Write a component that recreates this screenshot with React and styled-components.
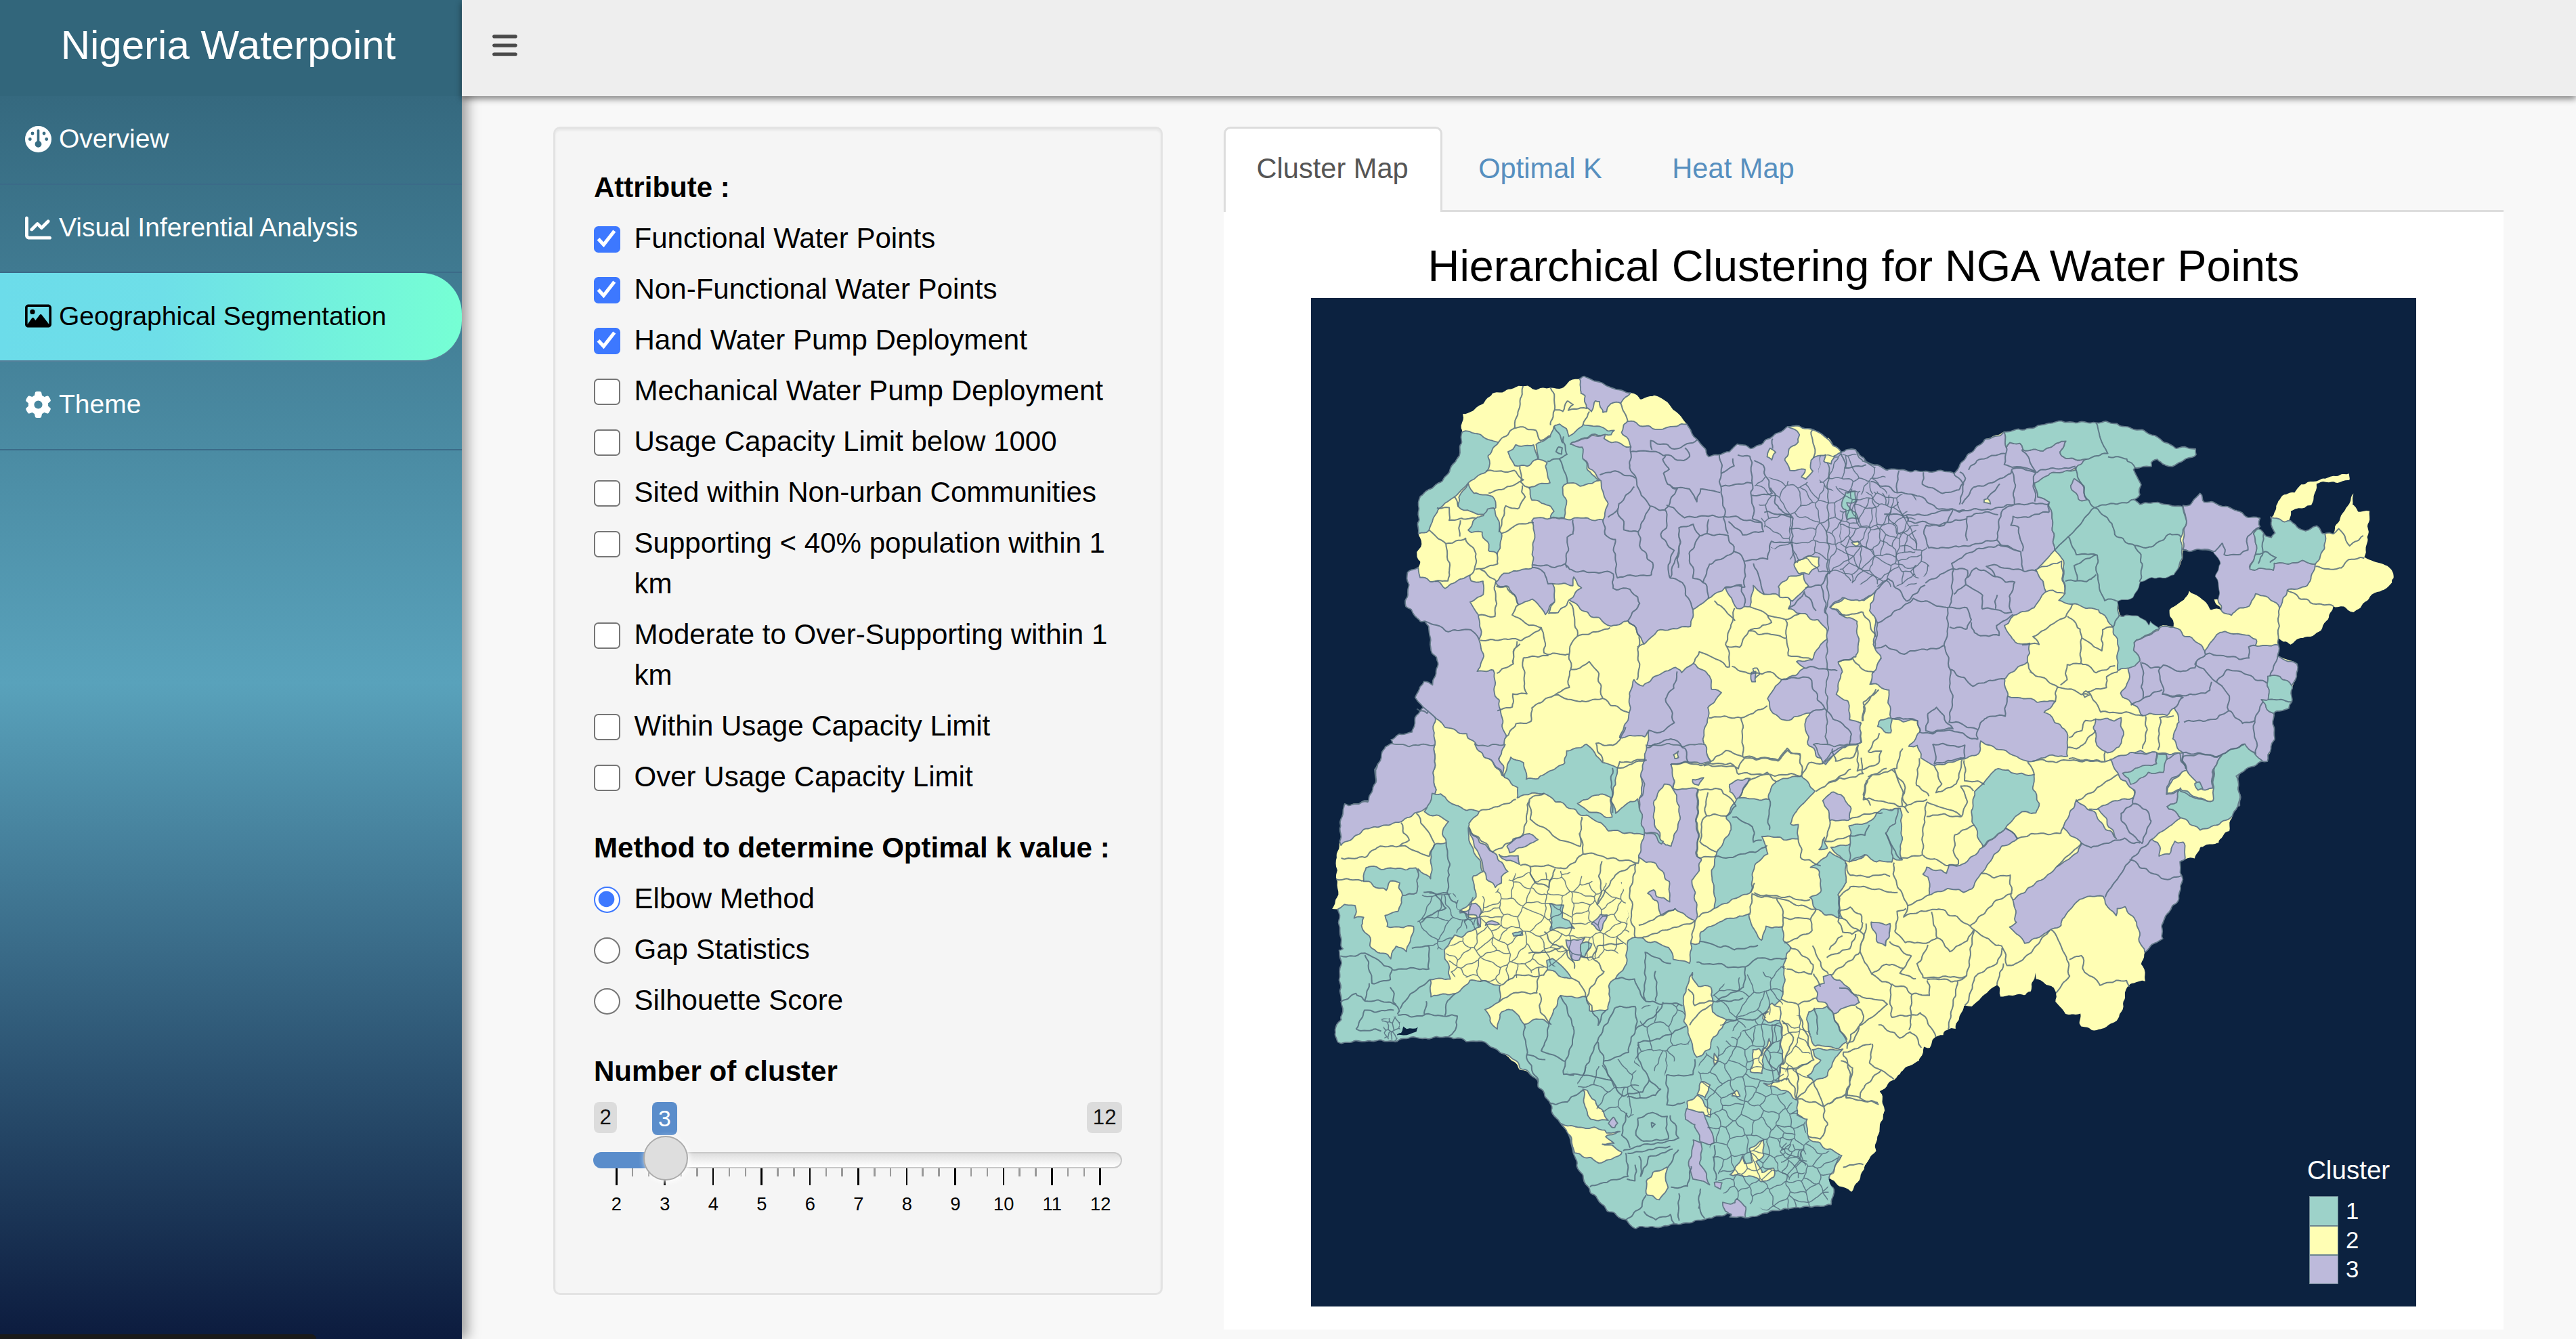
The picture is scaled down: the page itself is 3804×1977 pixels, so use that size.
import React, { useState } from "react";
import styled, { createGlobalStyle, css } from "styled-components";
import { FaBars, FaGauge, FaChartLine, FaRegImage, FaGear } from "react-icons/fa6";

/* ---------- map data: each sheet holds points in its own grid ---------- */

const TEAL = "#9dd2c9";
const YELLOW = "#fffeb4";
const PURPLE = "#bdbadb";
const OCEAN = "#0c2240";

const SHEETS = {
  A: [1930, 430, 0.54847, 0.48469],
  B: [2700, 430, 0.57398, 0.48469],
  C: [1930, 1100, 0.54847, 0.54847],
  D: [2700, 1100, 0.70408, 0.55931],
};

const AREAS = [
  // land
  ["A", YELLOW, "418,371 437,370 500,309 583,291 593,290 603,296 660,296 690,295 708,272 730,263 748,258 800,285 874,312 898,325 935,317 970,338 1022,403 1050,455 1085,500 1115,500 1135,492 1158,467 1205,475 1255,442 1297,411 1360,418 1405,452 1438,492 1465,482 1485,490 1505,520 1568,543 1600,560 1600,1568 96,1568 100,1563 170,1553 186,1500 180,1460 212,1405 232,1385 226,1365 250,1350 280,1345 297,1290 313,1268 290,1235 312,1188 337,1198 352,1145 350,1115 330,1090 332,1040 320,1005 303,1005 268,958 272,860 298,845 305,825 295,795 307,775 300,738 302,628 375,560 410,500 418,430"],
  ["B", YELLOW, "0,445 32,492 45,482 68,483 90,520 165,545 323,551 365,490 398,452 447,428 505,423 550,402 640,398 740,402 770,415 828,432 880,470 943,482 943,500 915,518 885,535 860,525 845,508 828,520 828,532 790,538 783,545 805,590 803,620 790,635 800,650 833,640 910,660 930,650 952,617 970,640 1050,665 1070,685 1110,690 1108,727 1138,752 1145,735 1138,685 1165,703 1190,697 1225,735 1255,718 1280,738 1302,740 1305,715 1325,670 1348,617 1350,650 1365,670 1390,673 1390,730 1380,810 1440,838 1455,870 1452,890 1430,910 1410,915 1380,945 1350,975 1302,957 1290,995 1270,1025 1262,1040 1240,1053 1215,1053 1190,1072 1168,1068 1158,1055 1155,1112 1180,1120 1203,1137 1205,1175 1195,1215 1190,1250 1180,1275 1145,1288 1145,1330 1147,1365 1130,1435 1100,1435 1055,1470 1057,1568 0,1620"],
  ["B", YELLOW, "1138,688 1148,683 1155,635 1172,617 1200,610 1215,590 1260,575 1340,553 1342,577 1290,580 1255,587 1245,650 1190,670 1187,697 1165,703"],
  ["C", YELLOW, "230,0 212,5 182,70 186,100 165,155 97,160 88,260 78,310 82,350 80,400 72,440 85,440 87,500 98,550 88,555 90,660 95,740 78,765 78,800 243,795 300,788 380,787 480,802 520,825 620,905 650,960 672,1010 705,1040 720,1110 755,1190 800,1245 858,1280 885,1302 1015,1288 1068,1278 1135,1260 1180,1270 1245,1260 1300,1245 1410,1240 1420,1200 1405,1165 1435,1190 1465,1200 1490,1165 1505,1130 1530,1095 1535,1040 1555,985 1545,930 1568,905 1600,885 1600,0"],
  ["D", YELLOW, "930,-20 928,25 912,45 870,70 855,80 862,95 860,150 845,185 843,225 828,240 820,262 800,262 780,265 768,298 747,300 737,310 742,355 735,405 715,435 702,460 700,515 685,525 667,548 658,580 665,622 645,625 625,640 618,690 605,730 585,745 572,752 530,745 528,710 495,708 478,680 480,650 462,635 437,618 432,602 427,650 415,658 362,662 355,630 325,665 302,690 285,688 268,750 245,752 240,768 225,768 215,797 200,797 190,835 160,855 135,880 108,915 105,940 117,968 105,1010 100,1075 80,1105 65,1140 0,1140 0,-20"],

  // northern purple belt
  ["A", PURPLE, "730,263 748,258 800,285 874,312 843,343 820,343 808,370 797,370 788,335 775,335 765,362 750,355 750,320 737,312 740,290"],
  ["A", PURPLE, "863,393 890,407 950,420 980,418 1022,403 1050,455 1085,500 1115,500 1135,492 1158,467 1205,475 1255,442 1297,411 1360,418 1405,452 1438,492 1465,482 1485,490 1505,520 1568,543 1600,560 1600,1230 1568,1212 1520,1195 1530,1155 1545,1110 1525,1080 1530,1010 1530,915 1500,940 1450,935 1410,960 1435,980 1460,1000 1480,1005 1480,1115 1430,1125 1436,1155 1425,1230 1455,1250 1460,1310 1490,1312 1492,1375 1465,1385 1430,1395 1400,1438 1375,1420 1350,1370 1340,1320 1355,1285 1290,1308 1255,1290 1240,1238 1275,1182 1315,1170 1338,1145 1315,1130 1360,1120 1385,1070 1408,1050 1380,1005 1340,985 1300,970 1305,940 1268,925 1230,925 1200,895 1195,960 1155,965 1125,900 1078,938 1040,970 1030,1020 945,1035 910,1075 868,1003 822,1022 745,975 705,935 665,940 640,980 610,942 570,950 545,905 505,888 530,860 608,842 610,700 615,692 697,692 800,695 807,650 790,577 765,545 745,505 708,468 770,440 800,435 802,450 850,470 872,473 850,430"],
  ["A", PURPLE, "272,860 298,845 303,870 345,885 370,902 400,880 437,863 445,885 475,885 475,920 437,945 465,988 465,1060 475,1115 460,1160 505,1150 505,1230 520,1250 525,1320 537,1360 518,1430 533,1478 475,1410 430,1350 375,1330 343,1295 343,1568 96,1568 170,1553 186,1500 180,1460 212,1405 232,1385 226,1365 250,1350 280,1345 297,1290 313,1268 290,1235 312,1188 337,1198 352,1145 350,1115 330,1090 332,1040 320,1005 303,1005 268,958"],
  ["A", PURPLE, "880,1183 905,1203 950,1165 990,1145 1010,1160 1040,1135 1085,1170 1090,1210 1112,1225 1080,1270 1068,1380 1085,1430 1035,1437 980,1440 985,1490 990,1568 900,1568 900,1480 915,1440 920,1340 905,1357 845,1357 865,1290 870,1240"],
  ["B", PURPLE, "0,460 15,490 32,492 45,482 68,483 90,520 165,545 323,551 365,490 398,452 458,428 455,475 465,462 490,465 510,487 550,485 600,453 610,455 597,490 610,512 665,510 635,540 532,585 535,625 570,640 583,790 535,850 560,900 560,918 530,965 480,985 453,1018 470,1060 500,1075 520,1075 515,1103 508,1130 450,1180 462,1235 555,1250 585,1252 557,1285 610,1335 617,1413 575,1415 520,1435 440,1395 390,1372 385,1410 350,1425 275,1445 240,1425 232,1385 205,1385 232,1345 232,1310 160,1303 155,1215 112,1195 117,1155 133,1120 122,1090 125,1010 108,975 122,915 80,945 35,935 5,960 30,985 75,1003 75,1115 25,1125 35,1155 22,1230 52,1250 55,1305 85,1315 82,1375 40,1388 -5,1430"],
  ["B", PURPLE, "912,655 930,650 952,617 970,640 1050,665 1070,685 1110,690 1112,715 1097,740 1100,800 1085,840 1145,850 1140,830 1215,822 1252,832 1235,895 1180,910 1160,962 1120,925 1095,920 1080,960 1045,970 1035,990 1012,972 1005,935 998,870 1010,830 990,793 910,787 922,700"],
  ["B", PURPLE, "855,1025 888,1022 930,1055 970,1092 1005,1035 1100,1055 1100,1080 1157,1080 1155,1112 1203,1137 1205,1175 1195,1200 1132,1175 1130,1245 1115,1245 1145,1288 1145,1330 1147,1365 1130,1435 1100,1435 1072,1385 1010,1415 990,1465 990,1515 965,1515 918,1455 880,1500 870,1530 900,1515 900,1540 870,1568 780,1568 785,1540 780,1505 750,1475 725,1430 800,1400 845,1410 910,1405 885,1365 905,1310 890,1268 870,1290 810,1290 785,1260 750,1225 770,1190 772,1145 800,1125 783,1070 850,1035"],
  ["B", PURPLE, "685,1325 690,1303 720,1300 735,1312 750,1303 758,1350 750,1390 720,1408 690,1385"],

  // yellow inliers of the north
  ["A", YELLOW, "665,893 713,893 718,873 740,905 710,940 700,955 675,980 650,978 663,945"],
  ["A", YELLOW, "1297,411 1360,418 1405,452 1438,492 1420,500 1410,530 1395,515 1395,498 1365,505 1355,515 1362,550 1345,575 1335,568 1340,540 1300,550 1290,520 1300,480 1325,460 1325,435"],
  ["A", YELLOW, "1245,480 1262,490 1250,513 1235,505"],
  ["A", YELLOW, "1313,825 1350,810 1377,812 1375,835 1350,862 1322,860"],
  ["A", YELLOW, "1268,900 1300,870 1335,865 1348,900 1310,940 1275,930"],
  ["A", YELLOW, "1470,760 1485,762 1488,775 1476,778"],
  ["A", YELLOW, "985,1412 998,1400 1004,1418 990,1422"],
  ["A", YELLOW, "1200,1150 1213,1148 1216,1165 1205,1178"],
  ["A", PURPLE, "1196,1160 1207,1160 1207,1188 1198,1185"],
  ["B", YELLOW, "532,850 600,822 607,918 575,915 560,918 558,895"],
  ["B", YELLOW, "402,638 410,632 414,648 402,649"],

  // teal of the north
  ["A", TEAL, "418,430 440,428 515,462 490,500 487,540 435,585 395,628 355,660 330,710 328,727 300,738 302,628 375,560 410,500"],
  ["A", TEAL, "435,588 447,615 500,625 508,655 480,680 440,675 410,655 405,625"],
  ["A", TEAL, "485,660 500,658 515,690 515,710 523,740 515,803 490,785 473,735 432,727 455,685 475,685"],
  ["A", TEAL, "540,490 560,470 612,468 618,510 590,535 560,530"],
  ["A", TEAL, "683,405 697,420 705,440 745,405 828,425 820,437 775,435 708,468 738,475 745,505 765,560 787,577 735,592 705,585 690,600 695,640 695,690 655,690 665,670 640,645 605,635 597,600 650,585 645,520 620,510 617,470 655,445 665,415"],
  ["A", TEAL, "1448,613 1475,612 1475,638 1455,642 1460,665 1478,672 1483,695 1455,695 1450,665 1437,650"],
  ["B", TEAL, "458,428 505,423 550,402 640,398 740,402 770,415 828,432 880,470 943,482 943,500 915,518 885,535 860,525 845,508 828,520 828,532 790,538 783,545 805,590 803,620 790,635 800,650 833,640 910,660 922,700 908,755 907,830 893,865 830,875 803,890 780,935 745,945 745,985 800,990 825,1013 830,1005 855,1028 783,1070 800,1125 785,1145 745,1153 743,1060 730,1022 695,970 630,955 592,940 607,918 605,820 583,790 570,640 535,625 532,585 570,555 635,545 640,530 665,510 610,512 597,490 610,455 600,453 550,485 510,487 490,465 465,462 455,475"],
  ["B", PURPLE, "635,570 625,595 640,632 663,635 655,595"],
  ["B", TEAL, "1138,685 1165,703 1190,697 1225,735 1255,718 1280,738 1275,790 1252,832 1215,822 1145,832 1145,850 1085,845 1100,800 1097,740 1108,727 1138,752 1145,735"],
  ["B", TEAL, "1132,1175 1160,1173 1197,1200 1190,1250 1180,1275 1145,1288 1112,1245 1130,1240"],
  ["B", TEAL, "1072,1385 1100,1410 1100,1435 1055,1470 1057,1568 870,1568 900,1540 902,1510 950,1545 990,1550 992,1515 990,1465 1010,1415"],
  ["B", TEAL, "845,1410 868,1408 862,1465 815,1475 780,1505 750,1475 800,1450 845,1440"],
  ["B", TEAL, "135,1305 163,1303 158,1345 125,1330"],

  // lake and lagoon
  ["B", OCEAN, "893,865 910,830 910,789 960,790 990,793 1010,830 998,870 1005,935 992,940 1012,972 990,970 960,940 928,910 915,940 878,972 888,1020 858,1022 852,1025 830,1005 825,1013 800,990 748,983 745,945 780,935 803,890 830,875"],

  // south-west
  ["C", PURPLE, "230,0 343,0 343,133 325,165 245,210 160,225 92,270 88,260 97,160 165,155 186,100 182,70 212,5"],
  ["C", PURPLE, "448,0 535,0 518,40 533,80"],
  ["C", PURPLE, "915,0 1070,0 1085,45 985,50 985,115 1050,120 1050,300 1062,305 1055,340 1035,365 1050,425 1045,475 990,440 950,458 943,420 918,400 930,388 955,415 978,420 975,370 940,320 893,305 910,240 895,200 898,150 910,120 900,85"],
  ["C", YELLOW, "985,25 998,15 1004,33 990,36"],
  ["C", YELLOW, "935,150 965,105 990,120 1003,170 1000,200 985,270 965,270 950,250 932,190"],
  ["C", PURPLE, "1040,90 1068,90 1055,110 1045,108"],
  ["C", PURPLE, "1160,95 1195,90 1160,145 1140,130 1142,105"],
  ["C", PURPLE, "432,222 475,270 500,285 518,310 540,340 525,355 522,370 508,382 485,360 465,300"],
  ["C", PURPLE, "520,295 550,302 568,300 568,318 535,312"],
  ["C", PURPLE, "540,275 555,250 600,240 622,255 580,275 545,290"],
  ["C", PURPLE, "1388,150 1410,127 1437,132 1460,165 1465,198 1405,205 1405,180"],
  ["C", PURPLE, "1520,480 1567,483 1570,500 1557,542 1535,515"],
  ["C", PURPLE, "1368,650 1388,640 1390,625 1408,620 1445,640 1492,693 1450,705 1415,725 1400,700 1372,680"],
  ["C", PURPLE, "1365,0 1460,0 1430,10 1415,20 1388,48"],
  ["C", TEAL, "533,90 545,32 585,48 588,90 620,90 697,50 700,15 755,0 800,50 838,60 820,150 830,180 870,150 893,145 900,200 910,240 815,232 790,210 750,190 690,160 635,130 565,138 565,115"],
  ["C", YELLOW, "725,155 780,130 818,140 818,195 760,180"],
  ["C", TEAL, "910,234 940,240 960,258 955,264 935,244"],
  ["C", TEAL, "1160,140 1243,150 1245,130 1265,100 1330,80 1368,125 1320,175 1298,210 1320,215 1325,255 1225,245 1240,290 1205,325 1195,400 1095,437 1098,400 1090,350 1100,290 1145,230 1130,190"],
  ["C", TEAL, "1355,410 1385,400 1380,340 1358,330 1410,290 1450,310 1452,370 1430,400 1440,468 1370,445"],
  ["C", TEAL, "1383,280 1395,250 1400,280"],
  ["C", TEAL, "1410,280 1480,260 1505,240 1510,215 1560,205 1568,170 1600,170 1600,310 1540,300 1500,300 1480,315 1450,310"],
  ["C", TEAL, "315,180 335,133 360,130 400,165 465,180 435,210 432,240 440,265 475,340 447,350 455,410 410,450 460,470 465,492 440,500 415,515 395,510 370,550 385,630 335,630 330,675 400,670 440,635 470,632 520,650 515,690 480,715 510,765 525,715 555,715 585,750 620,735 650,750 685,678 755,678 762,718 810,710 815,650 860,590 862,525 885,515 975,545 990,580 1030,585 1035,535 1058,535 1062,505 1120,475 1188,453 1205,505 1222,525 1235,490 1280,487 1285,530 1300,540 1285,600 1280,685 1240,715 1275,740 1280,800 1272,905 1230,910 1285,930 1320,955 1322,1000 1345,1005 1350,1060 1440,1105 1410,1150 1405,1165 1420,1200 1410,1240 1300,1245 1245,1260 1180,1270 1135,1260 1068,1278 1015,1288 885,1302 858,1280 800,1245 755,1190 720,1110 705,1040 672,1010 650,960 620,905 560,850 520,825 480,802 380,787 300,788 243,795 78,800 78,765 95,740 90,660 88,555 98,550 87,500 85,440 100,430 128,435 128,465 152,462 147,490 170,525 175,550 225,572 240,540 270,555 285,490 215,490 212,460 245,445 255,405 295,395 300,335 330,360 340,270 375,265 365,225 380,203"],
  ["C", TEAL, "155,330 170,325 210,335 295,330 300,345 295,395 255,405 250,370 225,365 215,390 180,380 155,365"],
  ["C", TEAL, "652,430 688,430 690,465 720,490 655,500 660,465"],
  ["C", TEAL, "645,580 660,572 690,600 715,628 690,625 650,605"],
  ["C", TEAL, "735,535 768,533 745,572 735,570"],
  ["C", TEAL, "1350,720 1400,705 1415,725 1450,795 1430,815 1370,810 1350,780"],
  ["C", TEAL, "1348,890 1380,850 1360,820 1440,820 1420,840 1400,890 1365,905"],
  ["C", TEAL, "555,508 575,500 577,512 558,517"],
  ["C", YELLOW, "1035,610 1050,650 1085,650 1095,680 1088,720 1132,740 1110,780 1095,790 1085,820 1050,845 1030,790 1020,750 1012,695 1025,655"],
  ["C", YELLOW, "685,1020 740,1030 800,1035 810,1045 843,1043 805,1055 828,1075 800,1072 845,1092 835,1108 785,1125 760,1110 720,1098 710,1050"],
  ["C", YELLOW, "745,925 757,932 765,950 785,970 810,1010 765,1010 747,975"],
  ["C", YELLOW, "915,1178 935,1150 968,1138 965,1170 972,1190 950,1220 915,1212"],
  ["C", YELLOW, "1025,960 1055,945 1065,965 1088,980 1085,1000 1022,980"],
  ["C", YELLOW, "1060,905 1085,915 1070,950 1055,940"],
  ["C", YELLOW, "1140,1155 1175,1108 1180,1128 1198,1122 1195,1085 1230,1060 1230,1105 1210,1125 1225,1150 1258,1140 1258,1165 1225,1176 1200,1158 1150,1162"],
  ["C", YELLOW, "1200,820 1215,815 1225,835 1245,790 1250,800 1230,835 1225,885 1195,880"],
  ["C", YELLOW, "1230,720 1225,735 1243,748 1275,740 1275,705 1250,695"],
  ["C", YELLOW, "1155,928 1168,945 1145,948"],
  ["C", YELLOW, "1095,830 1110,845 1100,860 1090,848"],
  ["C", TEAL, "1250,752 1275,760 1280,830 1270,885 1240,850 1232,830 1255,800"],
  ["C", PURPLE, "1020,980 1068,990 1098,1072 1060,1070 1045,1020 1018,1010"],
  ["C", PURPLE, "1040,1065 1062,1072 1058,1120 1083,1180 1040,1170 1028,1130"],
  ["C", PURPLE, "1118,1230 1155,1235 1160,1218 1182,1245 1180,1270 1140,1275 1145,1262 1125,1255"],
  ["C", PURPLE, "1097,1175 1120,1180 1112,1197 1100,1190"],
  ["C", PURPLE, "808,1020 820,1003 838,1015 830,1028"],
  ["C", PURPLE, "765,485 790,455 810,460 790,500"],
  ["C", PURPLE, "697,525 748,522 735,540 735,580 715,580"],
  ["C", PURPLE, "435,430 455,425 470,450 468,490 455,455 410,455 440,445"],
  ["C", PURPLE, "480,480 500,472 515,483 480,487"],
  ["C", OCEAN, "243,778 255,775 260,755 272,765 300,760 298,772 282,778 243,780"],
  ["C", OCEAN, "1403,1168 1420,1172 1430,1188 1450,1200 1425,1205 1416,1190"],

  // south-east
  ["D", PURPLE, "590,40 640,20 688,22 688,52 735,20 750,65 715,95 708,130 735,118 733,150 708,160 740,190 680,250 690,255 697,290 715,290 725,255 745,258 747,300 737,310 742,355 735,405 702,460 700,515 685,525 667,548 652,520 648,465 620,430 608,435 603,452 573,400 530,405 490,460 488,478 410,522 383,480 395,470 387,412 480,320 525,280 528,258 490,215 520,147 555,175 600,150 640,138 640,120 608,78"],
  ["D", PURPLE, "745,28 825,25 805,70 805,115 785,118 750,65"],
  ["D", YELLOW, "550,168 568,170 590,215 605,247 575,210"],
  ["D", PURPLE, "370,220 400,245 365,265 320,335 300,378 285,385 250,380 212,395 210,350 198,340 205,325 250,335 253,318 280,318 328,270"],
  ["D", PURPLE, "90,470 130,472 128,500 118,532 100,510"],
  ["D", TEAL, "348,65 375,65 395,78 430,78 432,120 442,155 435,178 405,180 370,220 325,270 305,215 300,170 308,120 325,100"],
  ["D", TEAL, "690,25 707,25 703,68 670,75 635,105 620,75 660,55 688,52"],
  ["D", TEAL, "875,0 895,25 912,45 870,70 855,80 862,95 860,150 845,185 820,205 780,225 740,190 708,160 733,150 735,115 770,143 805,145 810,60 825,25"],
  ["D", TEAL, "80,205 110,170 150,167 140,205 120,235 133,270 135,310 100,305 75,292 45,308 45,215"],
  ["D", TEAL, "770,103 780,100 785,115 776,120"],
];

const BORDERS = {
  A: "583,291 570,350 560,417 550,430 515,462|560,417 615,420 630,455 655,440|660,296 668,360 655,410|668,360 690,365 700,335 718,345 705,362 752,358|758,362 745,405|843,343 865,393|872,473 870,540 885,570 900,620 925,655 965,670 1000,600 970,590 960,560 975,545 960,510 968,497 895,485 872,490|928,485 925,458 1000,480 1050,458|968,497 1010,520 1030,505 1020,480|790,555 820,545 880,570|885,595 840,645 835,670 810,690|835,660 855,725 895,735 910,690 925,655|800,695 803,745 828,755 833,870 925,865 930,830 895,775 895,735|720,700 715,740 700,750 700,845|610,835 665,838 698,830 705,850 825,860 822,905 870,910 900,950 868,1003|608,842 640,855 650,890 665,893|965,670 968,720 950,740 985,790 970,830 980,875 1010,885 1025,930 1040,970|970,650 1020,690 1070,685 1128,685|1000,840 1000,790 1005,720 1040,715 1055,745 1030,800 1040,870 1075,890 1078,938|980,875 1000,780 1005,720|1055,745 1080,740 1078,695|1080,740 1130,745 1150,780 1150,795 1080,830 1070,890|1113,500 1115,610 1125,685 1130,740|970,590 1030,605 1050,640 1060,600 1113,612|1115,595 1198,583 1195,505 1160,497|1115,555 1150,530 1145,505|1128,685 1225,705 1230,735 1175,740 1135,705|1150,790 1178,818 1180,900 1125,900|1178,818 1240,815 1250,760 1305,770|1198,583 1200,690 1225,705|1230,670 1310,690 1305,770 1313,825|1255,450 1250,480|1200,625 1250,615 1240,570 1225,530 1205,515|1250,600 1270,665 1310,690|1360,418 1365,505|523,740 560,712 613,705|328,727 372,770 387,850 380,885 345,885|372,770 425,750 455,800 450,845 437,863|455,845 515,835 515,803|470,845 505,885 510,930 505,990 467,990|412,700 410,745|395,628 410,655|350,660 380,660 385,700 450,690|480,545 555,550 580,570 565,585 490,615|600,600 575,580 575,535|580,590 585,630 565,665 535,655 518,735|512,895 540,905 570,950 555,985 585,1010 635,1025 580,1060 540,1060 470,1065|635,1025 640,1100 695,1110 705,1105 712,1070 730,1050 710,950|730,1050 820,1025|565,1065 555,1140 510,1165|578,1070 560,1090 557,1135|580,1120 650,1105|580,1120 590,1225 555,1230 555,1270 515,1275|705,1105 710,1150 705,1210 665,1232 605,1265 605,1315 565,1315 537,1355|710,1150 735,1150 760,1130 785,1165 795,1243|665,1232 735,1250 795,1243 865,1285|868,1003 895,1050 890,1183|890,1080 910,1075|860,1330 838,1380 775,1380 800,1435|1040,1135 1055,1095 1140,1145 1130,1080 1150,965|1130,1085 1165,1080 1190,1035 1290,1055 1300,1110 1360,1120|1145,1145 1185,1165 1250,1160 1275,1182|1195,960 1240,985 1250,1010 1190,1035|1240,985 1290,1000 1290,1055|1290,1000 1330,980|1095,940 1150,1000|1080,1295 1170,1300 1240,1265|1170,1300 1175,1370 1170,1420|1085,1430 1130,1400 1175,1420 1265,1430 1290,1400 1330,1410 1330,1470|838,1450 915,1430|980,1440 1140,1440 1165,1470 1330,1475|995,1160 990,1210 965,1240 990,1310 960,1340 920,1340|915,1390 980,1362 1020,1390 1025,1437|1355,1285 1390,1270 1430,1310 1465,1345 1465,1385|1275,1182 1350,1175 1390,1270|1338,1145 1430,1155|1480,980 1500,980 1530,1050|1435,985 1480,980|1430,1125 1470,1120 1490,1150 1530,1160|1495,1310 1495,1270 1530,1215|320,1005 380,1035 440,1030 465,1060|313,1268 343,1295|300,1270 325,1290 330,1280|680,475 690,480 685,495 672,488 680,475|690,440 700,500 680,510 645,515|680,510 705,585|665,415 690,460|1130,905 1170,895 1178,960|1300,970 1340,915 1370,975|1340,905 1385,895 1400,985|1385,895 1410,850|1230,925 1205,830",
  B: "690,398 695,440 720,495 660,512|720,505 765,508 790,538|635,540 665,635 685,658 790,635|685,658 730,705 735,740 790,778 830,778 880,735 908,750|790,778 810,830 800,890|685,658 650,710 615,750 583,790|615,750 640,800 690,805 695,900 710,940 745,943|688,805 660,820 632,840 640,880 680,880 690,860|610,885 640,880|745,985 730,1022|1015,765 1018,800 1060,805 1080,790 1080,750 1108,720|910,787 995,790 1015,765|1100,800 1120,790 1150,810 1135,830|1105,830 1115,800 1120,740|1302,740 1315,728 1340,770 1380,743|1280,738 1302,740|1252,840 1320,848 1340,820 1380,813|1180,910 1240,950 1302,957|1160,962 1157,1080|970,1092 972,1105 945,1135 1000,1190 1025,1153 1060,1160 1130,1195|970,1105 1082,1120 1083,1083 1100,1080|1155,1112 1140,1175|1000,1190 1030,1230 1030,1280 1065,1315 1095,1305 1115,1250|1030,1280 1000,1300 915,1315|985,1190 985,1215 910,1235 862,1228 850,1160 860,1140 905,1160 945,1145 950,1130|805,1130 810,1180 808,1240 855,1210|855,1150 808,1135|808,1240 780,1260|862,1228 910,1240 890,1268|1095,1305 1100,1410|910,1405 1000,1415 1072,1385|910,1405 918,1455|1130,1240 1190,1250|815,1293 820,1340 805,1395|852,1300 850,1400|850,1298 885,1295|615,1360 650,1335 660,1310 690,1305|615,1390 650,1390 688,1340|617,1425 712,1430 715,1405|668,1230 590,1205 585,1252|520,1160 590,1205|508,1130 525,1165|600,1200 615,1185 610,1140 650,1130 690,1160 740,1140|648,1130 650,1030 615,990|648,1055 705,1095 705,1030 730,1022|745,1155 720,1170 715,1210 670,1218 700,1280 810,1290|630,955 610,990 530,1050 540,1075 500,1080|655,1225 665,1215 675,1228 660,1238 655,1225|122,1090 145,1080 195,1105 300,1078 310,965 220,938 125,1010|300,1078 312,1150 318,1260 312,1310 385,1335 400,1297 455,1295 462,1235|312,1150 370,1200 450,1180|385,1335 385,1370|255,1290 280,1270 320,1335 250,1340 255,1290|230,1345 330,1340 385,1370|270,1380 350,1385 350,1420 275,1440 270,1380|310,965 355,965 370,1000 360,1028 308,1022|370,1010 372,1045 440,1050 435,1015 475,985|320,845 315,965|320,845 355,850 355,895 320,920|355,895 395,925 398,965|398,965 470,980|355,870 380,840 430,870 480,890 465,930 468,980|430,870 410,835 500,850 535,855|435,925 430,970|250,885 320,845 320,830 380,790 440,770 495,795 500,850|500,795 490,720 470,710 475,690 568,675|568,675 570,645 480,650 450,665 430,760 495,795|355,760 355,690 400,670 435,680|430,760 355,775|245,740 260,785 355,775|245,740 250,715 355,695|145,682 260,680 320,665 355,670 400,665 480,650|180,548 175,610 235,625 285,665 355,665|245,550 245,590 300,615 335,610 355,570 340,550|323,551 350,590 335,650|370,595 430,580 470,560 475,545|370,595 340,650|475,540 480,650|440,590 410,630|360,545 385,515 455,495 455,475|455,495 455,530 530,545 530,640|530,545 500,480|475,540 530,548 635,535|110,580 175,610|120,915 155,870 200,945|200,945 250,890|200,680 205,700 300,715 320,665|32,492 45,540 100,530|10,1390 20,1435 65,1420 75,1380|75,1380 75,1460 130,1440 135,1400 100,1400|100,1480 175,1450 190,1390|170,1455 200,1568|235,1425 225,1500 260,1540|275,1445 290,1500 275,1530 330,1500 345,1430|95,1490 90,1530 110,1568|0,1500 60,1455|350,1430 350,1490 400,1500|130,1345 100,1400|232,1345 232,1310 200,1298 163,1303|90,1310 90,1250 130,1215",
  C: "90,305 155,305 185,275 250,270 330,300 345,265|250,210 275,255 250,270|295,185 320,225 345,265|80,362 155,362|375,265 385,350 375,400 405,430|378,400 330,400|315,395 345,400 375,440 340,450 305,480|90,570 160,560 230,605 330,600 325,545 285,545|160,565 175,640 225,635 228,605|165,640 160,690 230,690 250,715 245,725|90,690 130,665 160,690|225,650 240,700|250,710 290,665 320,640 335,630|245,728 405,728 400,770 380,785|130,765 155,715 235,715|320,690 317,725|130,765 200,770|380,690 370,725|400,670 380,690|435,225 500,285 580,240 600,145 635,130|465,180 565,145|600,145 600,200 690,260 735,270 740,190|735,240 745,290 890,318 893,305|745,290 700,330|570,320 600,325 700,330|790,310 790,400 780,430|885,318 830,350 800,400 780,430|885,318 870,400 875,470 885,515|600,325 610,370 650,380 665,330|520,650 560,620 640,620 650,605|625,670 630,720 655,750|515,690 560,665 620,670 625,600|750,678 735,640 715,628|755,678 760,655 800,610 770,570 735,572|755,678 785,750 800,710|830,705 885,705 885,765 865,830 800,850 780,800 830,705|685,678 720,760 700,850 635,825 650,750|700,850 690,890 720,890|585,750 590,830 620,905|640,850 590,830|830,630 880,630 910,690 1010,700|910,690 910,560 980,590|940,610 940,690|885,765 950,720 960,690|890,800 950,790 1020,760|800,850 810,890 850,945 900,935 920,900 890,840 890,800|650,965 700,960 745,930|740,885 820,905 850,945|700,890 740,885 780,800|860,950 940,945 955,930 920,900|970,890 970,970 1020,960|970,890 1035,890 1045,850|860,990 850,1050 870,1080|890,1010 885,1050 910,1070 970,1060 970,1000 930,990 890,1010|925,1015 940,1020 932,1030 925,1015|850,1090 1000,1060 980,1000|760,1190 865,1160 860,1100|860,1170 880,1172 885,1130|900,1160 920,1110 985,1085|895,1110 900,1160|865,1100 980,1080|970,1140 1000,1090|980,1190 1025,1190 1035,1130|858,1280 900,1240 912,1212|905,1255 940,1280 975,1265 990,1290|1000,1280 1000,1210|1055,1250 1060,1190|1068,1275 1055,1240|1100,1170 1095,1120 1100,1080|1052,302 1052,120 1115,118 1155,165 1130,190 1075,190 1075,130|1052,302 1100,302 1150,300 1205,290 1240,270|1243,150 1245,230|1145,190 1200,220 1205,260 1225,255|1075,190 1060,215 1060,260 1100,290|1095,437 1050,460|1045,475 1035,535|1190,455 1200,403 1265,412 1370,445|1205,370 1195,400|1205,400 1355,418|1325,255 1330,300 1380,325|1265,412 1285,465 1280,490|1285,465 1355,470 1370,445|1355,470 1360,500 1285,535|1360,540 1400,620|1440,468 1500,510 1485,560 1410,620|1300,540 1365,590 1360,615 1290,605|1365,615 1380,650|1370,680 1320,700 1280,685|1060,530 1130,545 1150,550 1215,540|1045,585 1180,600 1215,575 1295,575|1180,600 1175,650 1100,690|1030,655 1045,700 1085,690|1085,690 1140,690 1175,680|1130,740 1200,740 1240,715|1030,755 1060,720 1090,700|1370,710 1375,780|1280,740 1310,790 1280,860|1320,700 1350,800 1365,850 1320,870 1270,870|1275,905 1300,900 1320,950 1360,905|1320,870 1320,950|1365,905 1390,970 1315,950|1390,970 1445,940 1540,965|1390,970 1400,1025 1380,1060 1350,1055|1440,850 1470,870 1450,940|1450,800 1470,800 1500,730 1480,700|1415,725 1450,790|1370,125 1430,90 1500,80 1490,30|1070,55 1160,60 1180,30 1265,40 1290,10 1330,30 1330,80|1330,80 1350,50 1390,48|1165,140 1180,110 1200,90 1240,75 1265,100|1465,198 1550,180|1405,205 1400,260 1500,240 1510,215|838,60 840,45 910,40|820,60 822,180|1045,475 960,500 900,520|895,490 990,440|600,560 640,560 690,540 720,600|640,500 660,540 690,540|850,535 780,540 770,570",
  D: "420,45 430,78|430,42 590,42|605,78 520,150|370,220 400,245 440,235 490,232 490,215|320,335 350,350 380,345 387,412|387,388 345,415 300,478 230,430 160,453 165,425 212,395|140,310 135,340 165,425|45,370 145,390|35,310 45,345 130,345|300,478 310,495 365,535 375,580 400,578 468,490|470,490 500,560 505,610 480,650|505,565 530,555 538,600 570,630 625,622 630,640|577,400 635,305 655,275|632,305 700,352 740,347|528,258 550,270 620,248 655,262|640,155 612,180 625,220 658,262 678,200 665,170 640,155|640,155 640,138|655,275 680,250|305,487 290,610 200,615 185,580 210,530|365,540 350,580 305,615 288,688|368,575 355,630|272,622 250,750|288,612 272,622 210,618|215,440 230,510 255,545 290,520 305,487|160,430 145,440 140,490 160,520 210,522 230,510|80,475 65,540 90,605 130,635 130,680|90,605 120,575 160,590 175,560 130,520|160,590 150,605 185,615|130,633 165,640 175,660 210,660 210,620|130,680 135,720 165,715 195,705 225,768|175,660 170,750|105,740 150,770 175,755 195,800|90,790 88,840 110,860 135,880|110,860 70,910 65,935|40,930 45,870 33,810 88,790|0,945 35,920 40,935 105,942|25,640 70,665 125,680 45,765 40,800|20,465 28,440 45,432 65,445 75,470 68,492 50,500 30,490 20,465|25,455 20,400 45,370|120,60 80,90 75,140 155,160 160,110 135,65|205,150 195,290 250,318 275,315|205,150 280,185 290,150 280,105 305,120|265,240 305,215|205,185 280,187|265,240 262,280 275,315|195,290 150,300 120,235|160,165 205,145|75,1108 30,1110|155,160 170,180|0,560 45,540 60,500|0,540 30,500|480,320 528,258",
};

/* districts too small to outline one by one: sheet, cell size, zone */
const FINE_ZONES = [
  ["A", 46, "1200,560 1400,590 1568,620 1640,620 1640,900 1500,900 1320,830 1250,780 1225,700"],
  ["B", 44, "30,600 170,620 250,740 260,860 200,890 110,890 30,880"],
  ["A", 50, "1380,500 1480,495 1560,560 1560,620 1380,610"],
  ["C", 40, "395,420 500,400 560,345 700,340 780,370 850,370 870,500 850,560 640,600 520,645 390,620 375,550 440,500"],
  ["C", 38, "1050,850 1180,760 1250,700 1275,740 1285,930 1340,1010 1350,1065 1440,1110 1410,1160 1400,1238 1250,1255 1120,1210 1090,1100 1060,910"],
  ["C", 22, "1270,1060 1345,1090 1340,1160 1280,1170"],
  ["C", 55, "1090,650 1290,590 1280,700 1230,740 1120,780"],
  ["C", 50, "315,400 400,400 410,450 460,480 395,510 370,550 300,540 290,490"],
  ["C", 46, "1280,740 1350,720 1360,900 1290,905"],
  ["C", 60, "700,880 880,840 900,950 880,1000 800,1000"],
  ["C", 16, "205,735 250,735 245,795 205,790"],
  ["C", 60, "900,700 1010,700 1030,800 960,890 880,860"],
];

/* ---------- geometry ---------- */

const noise = (x, y, s) =>
  Math.sin(x * 0.31 + y * 0.17 + s) +
  Math.sin(y * 0.37 - x * 0.13 + s * 2.1) * 0.8 +
  Math.sin((x + y) * 0.11 + s * 3.3) * 0.9;

const wobble = ([x, y]) => [x + noise(x, y, 1.3), y + noise(y, x, 4.7)];

const read = (sheet, text) => {
  const [ox, oy, kx, ky] = SHEETS[sheet];
  return text.trim().split(" ").map((pair) => {
    const [x, y] = pair.split(",").map(Number);
    return [ox + x * kx, oy + y * ky];
  });
};

const roughen = (points, closed) => {
  const out = [];
  const last = closed ? points.length : points.length - 1;
  for (let i = 0; i < last; i += 1) {
    const a = points[i];
    const b = points[(i + 1) % points.length];
    const steps = Math.max(1, Math.round(Math.hypot(b[0] - a[0], b[1] - a[1]) / 3.5));
    for (let j = 0; j < steps; j += 1) {
      out.push(wobble([a[0] + ((b[0] - a[0]) * j) / steps, a[1] + ((b[1] - a[1]) * j) / steps]));
    }
  }
  if (!closed) out.push(wobble(points[points.length - 1]));
  return "M" + out.map((p) => `${p[0].toFixed(1)} ${p[1].toFixed(1)}`).join("L") + (closed ? "Z" : "");
};

const cells = (zone, size) => {
  const xs = zone.map((p) => p[0]);
  const ys = zone.map((p) => p[1]);
  const [x0, x1, y0, y1] = [Math.min(...xs), Math.max(...xs), Math.min(...ys), Math.max(...ys)];
  let state = 97;
  const random = () => {
    state = (state * 16807) % 2147483647;
    return state / 2147483647;
  };
  const seeds = [];
  for (let y = y0 - size; y < y1 + size; y += size) {
    for (let x = x0 - size; x < x1 + size; x += size) {
      seeds.push([x + random() * size * 1.3, y + random() * size * 1.3]);
    }
  }
  return seeds.map((s) => {
    let poly = [[s[0] - size * 2, s[1] - size * 2], [s[0] + size * 2, s[1] - size * 2], [s[0] + size * 2, s[1] + size * 2], [s[0] - size * 2, s[1] + size * 2]];
    seeds.forEach((t) => {
      if (t === s || Math.hypot(t[0] - s[0], t[1] - s[1]) > size * 5) return;
      const side = (p) => (p[0] - (s[0] + t[0]) / 2) * (t[0] - s[0]) + (p[1] - (s[1] + t[1]) / 2) * (t[1] - s[1]);
      const next = [];
      poly.forEach((p, i) => {
        const q = poly[(i + 1) % poly.length];
        const dp = side(p);
        const dq = side(q);
        if (dp <= 0) next.push(p);
        if (dp * dq < 0) {
          const r = dp / (dp - dq);
          next.push([p[0] + (q[0] - p[0]) * r, p[1] + (q[1] - p[1]) * r]);
        }
      });
      poly = next;
    });
    return poly;
  }).filter((p) => p.length > 2);
};

const areaShapes = AREAS.map(([sheet, fill, text], i) => ({
  fill,
  land: i < 5,
  d: roughen(read(sheet, text), true),
}));
const borderPath = Object.entries(BORDERS)
  .map(([sheet, text]) => text.split("|").map((line) => roughen(read(sheet, line), false)).join(""))
  .join("");
const zoneShapes = FINE_ZONES.map(([sheet, size, text]) => {
  const zone = read(sheet, text);
  return {
    clip: roughen(zone, true),
    d: cells(zone, size * SHEETS[sheet][2]).map((c) => roughen(c, true)).join(""),
  };
});

/* ---------- page ---------- */

const GlobalStyle = createGlobalStyle`
  * { box-sizing: border-box; }
  body {
    margin: 0;
    background: #f8f8f8;
    color: #000;
    font-family: "Liberation Sans", Arial, sans-serif;
    font-size: 41.6px;
    line-height: 60px;
    overflow: hidden;
  }
`;

const Page = styled.div`
  display: flex;
  height: 1977px;
  overflow: hidden;
`;

const Sidebar = styled.nav`
  position: relative;
  z-index: 2;
  flex: none;
  width: 682px;
  background: linear-gradient(to bottom, #2f6379 0, #35697f 142px, #59a2bb 1008px, #0c1b3e 1977px);
  box-shadow: 8px 0 18px rgba(0, 0, 0, 0.38);
`;

const Brand = styled.div`
  height: 142px;
  padding: 0 8px 8px 0;
  display: flex;
  align-items: center;
  justify-content: center;
  background: #32667b;
  color: #fff;
  font-size: 60px;
`;

const NavItem = styled.a`
  display: flex;
  align-items: center;
  gap: 11px;
  height: 130.7px;
  padding: 0 0 2px 37px;
  border-bottom: 2.6px solid #3b6a88;
  color: #fff;
  font-size: 39px;
  svg { flex: none; width: 39px; height: 39px; }
  ${(p) => p.$active && css`
    color: #000;
    border-bottom-color: #56809a;
    border-radius: 0 60px 60px 0;
    background: linear-gradient(to right, #6cdcea 0%, #6edfe8 35%, #76ffd4 100%);
  `}
`;

const StatusBubble = styled.div`
  position: absolute;
  left: 0;
  bottom: 0;
  width: 467px;
  height: 7px;
  border-top-right-radius: 8px;
  background: #1a1a1a;
`;

const Main = styled.div`
  flex: 1;
  display: flex;
  flex-direction: column;
`;

const TopBar = styled.header`
  position: relative;
  z-index: 3;
  flex: none;
  height: 142px;
  padding: 0 45px 8px;
  display: flex;
  align-items: center;
  background: #eee;
  color: #4a4a4a;
  font-size: 42px;
  box-shadow: 0 4px 9px rgba(0, 0, 0, 0.48);
  svg { width: 37px; height: 42px; }
`;

const Content = styled.main`
  display: flex;
  align-items: flex-start;
  gap: 90px;
  padding: 45px 107px 0 135px;
`;

const Controls = styled.form`
  flex: none;
  width: 900px;
  height: 1725px;
  padding: 57px 57px 55px;
  display: flex;
  flex-direction: column;
  border: 3px solid #e3e3e3;
  border-radius: 10px;
  background: #f5f5f5;
  box-shadow: inset 0 3px 3px rgba(0, 0, 0, 0.05);
`;

const GroupTitle = styled.h2`
  margin: 0;
  font-size: 42.05px;
  font-weight: bold;
  line-height: 60px;
`;

const Options = styled.div`
  display: flex;
  flex-direction: column;
  gap: 15px;
  margin: 15px 0 45px;
  font-size: 42.05px;
`;

const Option = styled.label`
  display: flex;
  align-items: flex-start;
  gap: 20.5px;
  margin-right: -10px;
`;

const Mark = styled.span`
  flex: none;
  display: flex;
  width: 39px;
  height: 39px;
  margin-top: 12px;
  border: 2.6px solid ${(p) => (p.$on ? "#3d78ff" : "#767676")};
  border-radius: ${(p) => (p.$round ? "50%" : "6.5px")};
  background: ${(p) => (p.$on && !p.$round ? "#3d78ff" : "#fff")};
  svg { width: 39px; height: 39px; margin: -2.6px; flex: none; }
`;

const OptionText = styled.span`
  width: 700px;
`;

const Slider = styled.div`
  display: flex;
  flex-direction: column;
`;

const Badges = styled.div`
  display: grid;
  grid-template-columns: 86px 1fr auto;
  align-items: start;
  height: 75px;
  padding-top: 15px;
`;

const Badge = styled.span`
  justify-self: start;
  height: ${(p) => (p.$current ? 49 : 46)}px;
  padding: 0 ${(p) => (p.$current ? 9 : 8.5)}px;
  border-radius: 8px;
  background: ${(p) => (p.$current ? "#5a8dcb" : "#dcdcdc")};
  color: ${(p) => (p.$current ? "#fff" : "#111")};
  font-size: ${(p) => (p.$current ? 33.8 : 31.2)}px;
  line-height: ${(p) => (p.$current ? 49 : 46)}px;
`;

const Track = styled.div`
  display: flex;
  align-items: center;
  height: 24px;
  margin-top: 14px;
  border: 2.6px solid #c8c8c8;
  border-radius: 12px;
  background: linear-gradient(to bottom, #dedede, #fff);
`;

const Filled = styled.div`
  width: 90px;
  height: 24px;
  margin-left: -2.6px;
  border-radius: 12px 0 0 12px;
  background: #5a8dcb;
`;

const Handle = styled.div`
  position: relative;
  z-index: 2;
  flex: none;
  width: 66px;
  height: 66px;
  margin: -6px 0 0 -16px;
  border: 2.6px solid #ababab;
  border-radius: 50%;
  background: #dedede;
  box-shadow: 2px 2px 8px rgba(255, 255, 255, 0.9);
`;

const Scale = styled.div`
  display: flex;
  justify-content: space-between;
  padding: 0 31px 0 32px;
`;

const Tick = styled.span`
  width: 2.6px;
  height: ${(p) => (p.$major ? 25 : 12)}px;
  background: ${(p) => (p.$major ? "#000" : "#999")};
`;

const ScaleLabels = styled.div`
  display: flex;
  justify-content: space-between;
  margin: 11px -4px 0 -2.5px;
`;

const ScaleLabel = styled.span`
  width: 71.45px;
  text-align: center;
  font-size: 27.3px;
  line-height: 33px;
`;

const Results = styled.section`
  flex: 1;
`;

const Tabs = styled.div`
  display: flex;
  height: 126px;
  gap: 5px;
  border-bottom: 3px solid #ddd;
`;

const Tab = styled.button`
  height: 126px;
  padding: 0 47px 5px 45.5px;
  border: 3px solid transparent;
  border-bottom: 0;
  border-radius: 10px 10px 0 0;
  background: transparent;
  color: #568fbf;
  font: inherit;
  ${(p) => p.$active && css`
    border-color: #ddd;
    background: #fff;
    color: #555;
  `}
`;

const Plot = styled.div`
  display: flex;
  flex-direction: column;
  align-items: center;
  height: 1650px;
  background: #fff;
`;

const PlotTitle = styled.h1`
  margin: 0;
  height: 127px;
  padding-top: 43px;
  font-size: 64.8px;
  font-weight: normal;
  line-height: 74px;
  white-space: nowrap;
`;

const MapFrame = styled.div`
  display: grid;
  width: 1632px;
  height: 1489px;
  background: ${OCEAN};
  & > * { grid-area: 1 / 1; }
`;

const MapDrawing = styled.svg`
  display: block;
  width: 1632px;
  height: 1488px;
`;

const Legend = styled.div`
  align-self: end;
  justify-self: end;
  display: flex;
  flex-direction: column;
  width: 161px;
  padding-bottom: 33px;
  color: #fff;
  font-size: 38.6px;
  line-height: 46px;
`;

const LegendTitle = styled.div`
  margin-bottom: 15px;
`;

const LegendRow = styled.div`
  display: flex;
  align-items: center;
  gap: 11px;
  height: 43.2px;
  padding-left: 3px;
  font-size: 34.8px;
`;

const Swatch = styled.span`
  width: 43px;
  height: 43.2px;
  border: 1.5px solid #6c8590;
  background: ${(p) => p.$color};
`;

const NAV = [
  ["Overview", FaGauge],
  ["Visual Inferential Analysis", FaChartLine],
  ["Geographical Segmentation", FaRegImage],
  ["Theme", FaGear],
];

const ATTRIBUTES = [
  "Functional Water Points",
  "Non-Functional Water Points",
  "Hand Water Pump Deployment",
  "Mechanical Water Pump Deployment",
  "Usage Capacity Limit below 1000",
  "Sited within Non-urban Communities",
  "Supporting < 40% population within 1 km",
  "Moderate to Over-Supporting within 1 km",
  "Within Usage Capacity Limit",
  "Over Usage Capacity Limit",
];

const METHODS = ["Elbow Method", "Gap Statistics", "Silhouette Score"];
const TABS = ["Cluster Map", "Optimal K", "Heat Map"];

function Check() {
  return (
    <svg viewBox="0 0 39 39">
      <path d="M7.5 19.8L15.4 28.3L31.3 8" fill="none" stroke="#fff" strokeWidth="5.2" />
    </svg>
  );
}

function Dot() {
  return (
    <svg viewBox="0 0 39 39">
      <circle cx="19.5" cy="19.5" r="11.8" fill="#3d78ff" />
    </svg>
  );
}

function ClusterMap() {
  return (
    <MapDrawing viewBox="1936 440 1632 1488">
      <defs>
        {zoneShapes.map((z, i) => (
          <clipPath id={`zone${i}`} key={i}>
            <path d={z.clip} />
          </clipPath>
        ))}
      </defs>
      {areaShapes.map((a, i) => (
        <path key={i} d={a.d} fill={a.fill} stroke={a.land || a.fill === OCEAN ? "none" : "#647a89"} strokeWidth="1.8" strokeLinejoin="round" />
      ))}
      <g fill="none" stroke="#536b7d" strokeOpacity="0.85" strokeWidth="2" strokeLinejoin="round">
        <path d={borderPath} />
        {zoneShapes.map((z, i) => (
          <path key={i} d={z.d} clipPath={`url(#zone${i})`} strokeWidth="1.5" />
        ))}
      </g>
    </MapDrawing>
  );
}

export default function App() {
  const [picked, setPicked] = useState([0, 1, 2]);
  const [method, setMethod] = useState(0);
  const [tab, setTab] = useState(0);
  const toggle = (i) => setPicked(picked.includes(i) ? picked.filter((n) => n !== i) : [...picked, i]);

  return (
    <>
      <GlobalStyle />
      <Page>
        <Sidebar>
          <Brand>Nigeria Waterpoint</Brand>
          {NAV.map(([label, Icon], i) => (
            <NavItem key={label} $active={i === 2}>
              <Icon />
              {label}
            </NavItem>
          ))}
          <StatusBubble />
        </Sidebar>
        <Main>
          <TopBar>
            <FaBars />
          </TopBar>
          <Content>
            <Controls>
              <GroupTitle>Attribute :</GroupTitle>
              <Options>
                {ATTRIBUTES.map((label, i) => (
                  <Option key={label} onClick={() => toggle(i)}>
                    <Mark $on={picked.includes(i)}>{picked.includes(i) && <Check />}</Mark>
                    <OptionText>{label}</OptionText>
                  </Option>
                ))}
              </Options>
              <GroupTitle>Method to determine Optimal k value :</GroupTitle>
              <Options>
                {METHODS.map((label, i) => (
                  <Option key={label} onClick={() => setMethod(i)}>
                    <Mark $round $on={method === i}>{method === i && <Dot />}</Mark>
                    <OptionText>{label}</OptionText>
                  </Option>
                ))}
              </Options>
              <GroupTitle>Number of cluster</GroupTitle>
              <Slider>
                <Badges>
                  <Badge>2</Badge>
                  <Badge $current>3</Badge>
                  <Badge>12</Badge>
                </Badges>
                <Track>
                  <Filled />
                  <Handle />
                </Track>
                <Scale>
                  {Array.from({ length: 31 }, (_, i) => (
                    <Tick key={i} $major={i % 3 === 0} />
                  ))}
                </Scale>
                <ScaleLabels>
                  {Array.from({ length: 11 }, (_, i) => (
                    <ScaleLabel key={i}>{i + 2}</ScaleLabel>
                  ))}
                </ScaleLabels>
              </Slider>
            </Controls>
            <Results>
              <Tabs>
                {TABS.map((label, i) => (
                  <Tab key={label} $active={tab === i} onClick={() => setTab(i)}>
                    {label}
                  </Tab>
                ))}
              </Tabs>
              <Plot>
                <PlotTitle>Hierarchical Clustering for NGA Water Points</PlotTitle>
                <MapFrame>
                  <ClusterMap />
                  <Legend>
                    <LegendTitle>Cluster</LegendTitle>
                    {[TEAL, YELLOW, PURPLE].map((color, i) => (
                      <LegendRow key={color}>
                        <Swatch $color={color} />
                        {i + 1}
                      </LegendRow>
                    ))}
                  </Legend>
                </MapFrame>
              </Plot>
            </Results>
          </Content>
        </Main>
      </Page>
    </>
  );
}
